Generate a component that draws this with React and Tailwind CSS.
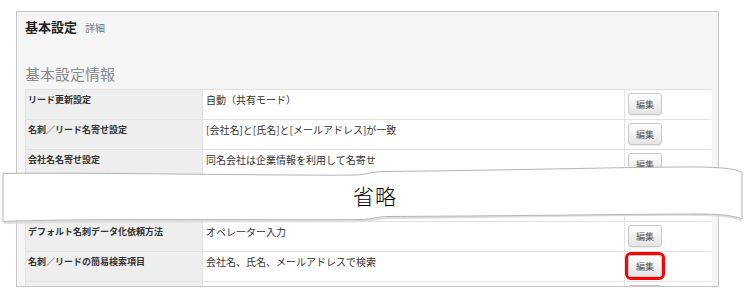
const ROWS = [
  { label: "リード更新設定", value: "自動（共有モード）" },
  { label: "名刺／リード名寄せ設定", value: "[会社名]と[氏名]と[メールアドレス]が一致" },
  { label: "会社名名寄せ設定", value: "同名会社は企業情報を利用して名寄せ" },
  { label: "", value: "", filler: true },
  { label: "デフォルト名刺データ化依頼方法", value: "オペレーター入力" },
  { label: "名刺／リードの簡易検索項目", value: "会社名、氏名、メールアドレスで検索", marked: true },
  { label: "", value: "", peek: true },
];

function EditButton({ marked, peek }) {
  const btn = (
    <button className="block w-[34px] h-[22px] rounded-[3px] border border-[#c9c9c9] bg-gradient-to-b from-white to-[#e4e4e4] text-[9px] leading-none text-[#555] shadow-[0_1px_1px_rgba(0,0,0,0.08)]">
      {peek ? "" : "編集"}
    </button>
  );
  if (!marked) return btn;
  return (
    <div className="-ml-[3px] -mt-[3px] w-[40px] h-[28px] rounded-[6px] border-[3px] border-[#f00]">
      {btn}
    </div>
  );
}

function Row({ row }) {
  return (
    <div
      className={`grid grid-cols-[176px_422px_88px] border-b border-[#e2e2e2] ${
        row.filler ? "h-[42px]" : "h-[30px]"
      }`}
    >
      <div className="bg-[#eeeeee] pl-[2px] pt-[4px] text-[9px] leading-[12px] font-bold text-[#333]">
        {row.label}
      </div>
      <div className="bg-white border-l border-[#e2e2e2] pl-[3px] pt-[3px] text-[10px] leading-[14px] text-[#333]">
        {row.value}
      </div>
      <div className="bg-white border-l border-[#e2e2e2] pl-[3px] pt-[3px]">
        {!row.filler && <EditButton marked={row.marked} peek={row.peek} />}
      </div>
    </div>
  );
}

function OmitBanner() {
  return (
    <div className="absolute left-0 top-[160px] w-[750px] h-[70px] flex items-center justify-center">
      <svg className="absolute inset-0" width="750" height="70" viewBox="0 160 750 70">
        <path
          d="M4,223 C80,220 300,222 360,221 C372,221 376,218 390,218 C500,217 650,214 700,215 C724,215 736,217 742,221"
          fill="none"
          stroke="#dcdcdc"
          strokeWidth="2"
        />
        <path
          d="M3,173.5 C60,172 300,176 355,175 C366,175 370,171.5 385,171.5 C500,170.5 650,166.5 700,167 C724,167.5 737,169 742,172.5 L742,219 C735,216 722,214 700,214 C650,214 500,216 390,216.5 C376,216.5 373,219.5 360,219.5 C300,220.5 80,218 3,221.5 Z"
          fill="#fff"
          stroke="#b4b4b4"
          strokeWidth="1"
        />
      </svg>
      <span className="relative text-[21px] leading-none font-light text-black tracking-[1px]">省略</span>
    </div>
  );
}

export default function App() {
  return (
    <div className="relative w-[750px] h-[297px] overflow-hidden bg-white font-['Noto_Sans_CJK_JP','Noto_Sans',sans-serif]">
      <div className="ml-[16px] mt-[11px] w-[703px] h-[276px] overflow-hidden border border-[#c6c6c6] bg-[#f5f5f5] pl-[8px]">
        <div className="pt-[7px] flex items-baseline">
          <span className="text-[13px] leading-[16px] font-bold text-[#222]">基本設定</span>
          <span className="ml-[8px] text-[10px] text-[#777]">詳細</span>
        </div>
        <div className="mt-[29px] text-[15px] leading-[20px] text-[#8a8a8a]">基本設定情報</div>
        <div className="mt-[5px] w-[686px] border-t border-l border-r border-[#e2e2e2]">
          {ROWS.map((row, i) => (
            <Row key={i} row={row} />
          ))}
        </div>
      </div>
      <OmitBanner />
    </div>
  );
}
